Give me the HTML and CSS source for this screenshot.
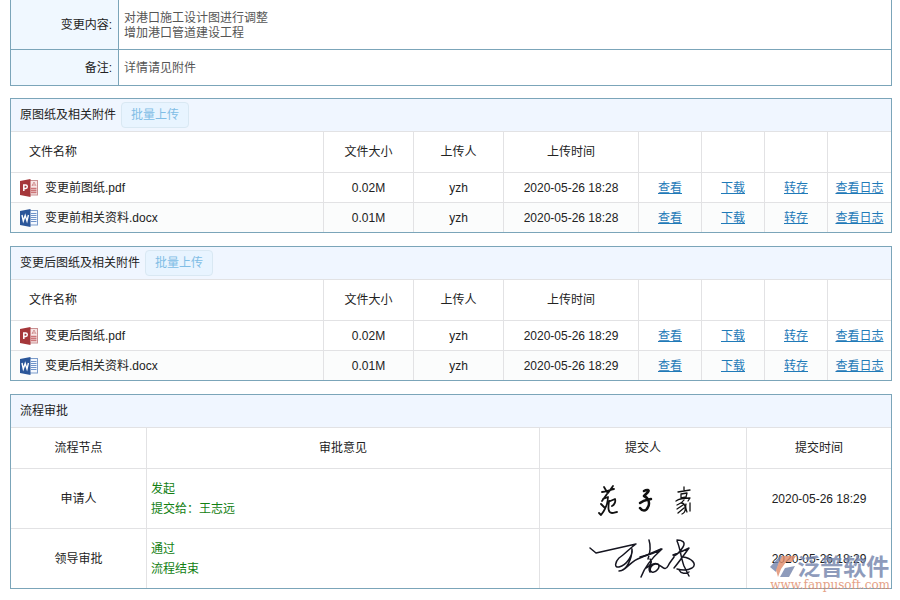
FILE: index.html
```html
<!DOCTYPE html>
<html lang="zh-CN">
<head>
  <meta charset="UTF-8" />
  <meta name="viewport" content="width=device-width, initial-scale=1.0"/>
  <title>变更审批</title>
  <link rel="stylesheet" href="styles.css">
</head>
<body>
  <!-- shared file icons -->
  <svg class="icon-defs" aria-hidden="true">
    <symbol id="icon-pdf" viewBox="0 0 18 18">
      <rect x="9" y="1.5" width="8.5" height="14.5" fill="#f8e6e6" stroke="#c99092"/>
      <path d="M12 7l2-4 2 4M12 6h3" fill="none" stroke="#c98082" stroke-width=".8"/>
      <path d="M11 9.500h5.500M11 11.500h5.500M11 13.500h5.500" stroke="#cc7578" stroke-width="1.400"/>
      <path d="M0 2L10.500 0v18L0 16z" fill="#a5373a"/>
      <path d="M3.800 12V6h1.800a1.600 1.600 0 0 1 0 3.400H3.800" fill="none" stroke="#fff" stroke-width="1.500"/>
    </symbol>
    <symbol id="icon-word" viewBox="0 0 18 18">
      <rect x="9" y="1.500" width="8.500" height="14.500" fill="#f4f8fe" stroke="#7d9dcb"/>
      <path d="M11 4.500h5.500M11 6.500h5.500M11 8.500h5.500M11 10.500h5.500M11 12.500h5.500" stroke="#6f93c8"/>
      <path d="M0 2L10.500 0v18L0 16z" fill="#2b5699"/>
      <path d="M2 6l1.300 6L5.200 6.500 7 12l1.400-6" fill="none" stroke="#fff" stroke-width="1.400"/>
    </symbol>
  </svg>

  <main class="page">
    <table class="form">
      <tr class="tall">
        <th scope="row">变更内容:</th>
        <td>对港口施工设计图进行调整<br>增加港口管道建设工程</td>
      </tr>
      <tr>
        <th scope="row">备注:</th>
        <td>详情请见附件</td>
      </tr>
    </table>

    <section class="panel">
      <div class="panel-head">
        <span>原图纸及相关附件</span>
        <button type="button" class="upload">批量上传</button>
      </div>
      <table class="grid files">
        <thead>
          <tr>
            <th class="name">文件名称</th>
            <th class="size">文件大小</th>
            <th class="user">上传人</th>
            <th class="time">上传时间</th>
            <th class="act"></th>
            <th class="act"></th>
            <th class="act"></th>
            <th class="log"></th>
          </tr>
        </thead>
        <tbody>
          <tr>
            <td class="name"><div class="file"><svg class="icon"><use href="#icon-pdf"/></svg>变更前图纸.pdf</div></td>
            <td>0.02M</td>
            <td>yzh</td>
            <td>2020-05-26 18:28</td>
            <td><a href="#">查看</a></td>
            <td><a href="#">下载</a></td>
            <td><a href="#">转存</a></td>
            <td><a href="#">查看日志</a></td>
          </tr>
          <tr>
            <td class="name"><div class="file"><svg class="icon"><use href="#icon-word"/></svg>变更前相关资料.docx</div></td>
            <td>0.01M</td>
            <td>yzh</td>
            <td>2020-05-26 18:28</td>
            <td><a href="#">查看</a></td>
            <td><a href="#">下载</a></td>
            <td><a href="#">转存</a></td>
            <td><a href="#">查看日志</a></td>
          </tr>
        </tbody>
      </table>
    </section>

    <section class="panel">
      <div class="panel-head">
        <span>变更后图纸及相关附件</span>
        <button type="button" class="upload">批量上传</button>
      </div>
      <table class="grid files">
        <thead>
          <tr>
            <th class="name">文件名称</th>
            <th class="size">文件大小</th>
            <th class="user">上传人</th>
            <th class="time">上传时间</th>
            <th class="act"></th>
            <th class="act"></th>
            <th class="act"></th>
            <th class="log"></th>
          </tr>
        </thead>
        <tbody>
          <tr>
            <td class="name"><div class="file"><svg class="icon"><use href="#icon-pdf"/></svg>变更后图纸.pdf</div></td>
            <td>0.02M</td>
            <td>yzh</td>
            <td>2020-05-26 18:29</td>
            <td><a href="#">查看</a></td>
            <td><a href="#">下载</a></td>
            <td><a href="#">转存</a></td>
            <td><a href="#">查看日志</a></td>
          </tr>
          <tr>
            <td class="name"><div class="file"><svg class="icon"><use href="#icon-word"/></svg>变更后相关资料.docx</div></td>
            <td>0.01M</td>
            <td>yzh</td>
            <td>2020-05-26 18:29</td>
            <td><a href="#">查看</a></td>
            <td><a href="#">下载</a></td>
            <td><a href="#">转存</a></td>
            <td><a href="#">查看日志</a></td>
          </tr>
        </tbody>
      </table>
    </section>

    <section class="panel">
      <div class="panel-head"><span>流程审批</span></div>
      <table class="grid flow">
        <thead>
          <tr>
            <th class="node">流程节点</th>
            <th>审批意见</th>
            <th class="sign">提交人</th>
            <th class="date">提交时间</th>
          </tr>
        </thead>
        <tbody>
          <tr>
            <td>申请人</td>
            <td class="opinion">发起<br>提交给：王志远</td>
            <td>
              <svg class="signature" viewBox="0 0 110 50" role="img" aria-label="签名">
                <g fill="none" stroke="#111" stroke-linecap="round" stroke-linejoin="round">
                  <path d="M14 18c4 0 7-2 12-3M16 13l3 5M25 12l-5 7" stroke-width="1.800"/>
                  <path d="M19 20l-5 7M15 25l5-2c0 7-3 13-7 18l-2-2M13 30l4 4" stroke-width="1.800"/>
                  <path d="M20 28l7-3c1 3-1 6-3 7M21 27c-1 7-1 12 3 12 2 0 4-1 5-1" stroke-width="1.800"/>
                  <path d="M56 17c3-2 6-1 4 1l-4 4c5 2 6 8 4 11-2 5-6 4-8 1" stroke-width="2.500"/>
                  <path d="M52 29c4-3 7-3 11-4" stroke-width="2.500"/>
                  <path d="M96 13v3M90 18l12-2M93 20l6-1-1 4-5 1zM88 27c4-3 9-3 14-3l-2 3" stroke-width="1.300"/>
                  <path d="M96 26c-2 3-5 4-7 5M93 29c5 0 6 9 1 11M95 31l-6 4M96 34l-6 5M98 30c-1 3 0 5 1 8M102 29v8" stroke-width="1.300"/>
                </g>
              </svg>
            </td>
            <td>2020-05-26 18:29</td>
          </tr>
          <tr>
            <td>领导审批</td>
            <td class="opinion">通过<br>流程结束</td>
            <td>
              <svg class="signature" viewBox="-2 -1 110 50" role="img" aria-label="签名">
                <g fill="none" stroke="#151520" stroke-width="1.500" stroke-linecap="round" stroke-linejoin="round">
                  <path d="M0 13l6 5L46 9c-6 4-11 10-17 14-4 4-5 10 0 9 8-2 14-12 13-18 0 9-5 22-13 22M33 35c6-4 10-10 17-12l21-9"/>
                  <path d="M59 5c2 6 1 13-1 19M50 22c9-2 15-4 22-8-9 8-17 17-21 28M60 24c3 3 0 7-4 9M60 37c-3-5 3-10 8-8 3 3-2 9-6 8-3-1-2-5 1-7 7-5 11 9 15 1 2-4 4-6 6-9"/>
                  <path d="M87 5c5 0 9 2 6 7-3 5-7 8-9 9M87 6c3 6 4 17 7 25l5 10M83 20c6-2 10-4 16-7-5 7-10 14-15 20M93 22c8 1 15 7 9 11-5 3-11 2-15 1M89 35c2 4 7 4 10 2"/>
                </g>
              </svg>
            </td>
            <td>2020-05-26 18:29</td>
          </tr>
        </tbody>
      </table>

      <div class="watermark">
        <div class="brand">
          <svg class="brand-logo" viewBox="0 0 27 24" aria-hidden="true">
            <path d="M0 12L10 1h5L9 8l-3 9z" fill="#7383ab"/>
            <path d="M12 1h14l-4 6h-6l-5 7-3 8-2-7 3-8z" fill="#e08a68"/>
            <path d="M10 22l5-9 10-2-6 11z" fill="#7383ab"/>
          </svg>
          <span>泛普软件</span>
        </div>
        <div class="site">www.fanpusoft.com</div>
      </div>
    </section>
  </main>
</body>
</html>
```

FILE: styles.css
```css
* {
  box-sizing: border-box;
}

body {
  margin: 0;
  background: #fff;
  color: #222;
  font-family: "Liberation Sans", "Noto Sans CJK SC", sans-serif;
  font-size: 12px;
  line-height: 20px;
}

.icon-defs {
  display: none;
}

.page {
  padding: 0 8px 0 10px;
}

table {
  width: 100%;
  border-collapse: separate;
  border-spacing: 0;
  table-layout: fixed;
}

th {
  font-weight: normal;
}

/* form rows */
.form {
  margin-bottom: 12px;
  border-left: 1px solid #7ba5b9;
  border-right: 1px solid #7ba5b9;
}

.form th,
.form td {
  height: 36px;
  padding: 2px 5px 0;
  border-bottom: 1px solid #7ba5b9;
  line-height: 15px;
}

.form .tall th,
.form .tall td {
  height: 50px;
}

.form th {
  width: 108px;
  padding-right: 6px;
  border-right: 1px solid #7ba5b9;
  background: #f0f8ff;
  text-align: right;
}

.form td {
  color: #555;
}

/* panels */
.panel {
  position: relative;
  margin-bottom: 13px;
  border: 1px solid #7ba5b9;
}

.panel-head {
  display: flex;
  align-items: center;
  gap: 5px;
  height: 32px;
  padding: 0 9px;
  background: #f0f6ff;
}

.upload {
  height: 26px;
  padding: 0 9px;
  border: 1px solid #d9e8f3;
  border-radius: 4px;
  background: #e8f4ff;
  color: #80bde5;
  font: inherit;
  cursor: pointer;
}

.grid th,
.grid td {
  height: 30px;
  padding: 0;
  border-top: 1px solid #e2e2e4;
  border-left: 1px solid #e2e2e4;
  text-align: center;
}

.grid th {
  height: 41px;
}

.grid th:first-child,
.grid td:first-child {
  border-left: 0;
}

.files tbody tr:nth-child(even) {
  background: #fbfcfc;
}

.grid .name {
  padding-left: 9px;
  text-align: left;
}

.grid th.name {
  padding-left: 18px;
}

.size,
.user {
  width: 90px;
}

.time {
  width: 135px;
}

.act {
  width: 63px;
}

.log {
  width: 64px;
}

.file {
  display: flex;
  align-items: center;
  gap: 7px;
}

.icon {
  width: 18px;
  height: 18px;
}

a {
  color: #1f7ab8;
  text-decoration: underline;
}

/* approval flow */
.flow td {
  height: 60px;
}

.node {
  width: 135px;
}

.sign {
  width: 207px;
}

.date {
  width: 145px;
}

.flow .opinion {
  padding-left: 4px;
  color: #128012;
  text-align: left;
}

.signature {
  display: block;
  width: 110px;
  height: 50px;
  margin: 0 auto;
}

.watermark {
  position: absolute;
  right: 1px;
  bottom: -3px;
  opacity: 0.8;
  pointer-events: none;
}

.brand {
  display: flex;
  align-items: center;
  color: #7383ab;
  font-size: 23px;
  font-weight: bold;
  line-height: 24px;
}

.brand-logo {
  width: 27px;
  height: 24px;
}

.site {
  color: #e08a68;
  font-family: "DejaVu Serif", serif;
  font-size: 12px;
  line-height: 12px;
  text-align: right;
}
```
